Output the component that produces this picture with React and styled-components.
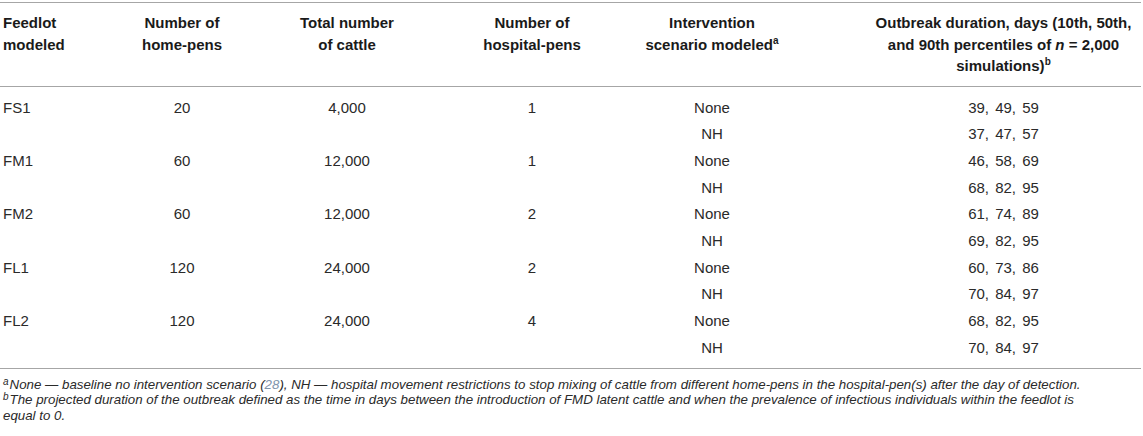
import React from "react";
import styled, { createGlobalStyle } from "styled-components";

const Global = createGlobalStyle`
  html, body { margin: 0; padding: 0; background: #fff; }
  body { font-family: "Liberation Sans", Arial, sans-serif; color: #222; }
`;

const Wrap = styled.div`
  width: 1141px;
  padding-top: 2px;
`;

const Table = styled.table`
  width: 100%;
  table-layout: fixed;
  border-collapse: collapse;
  border-top: 1px solid #a6a6a6;
  border-bottom: 1px solid #a6a6a6;
  font-size: 15px;
`;

const Th = styled.th`
  font-weight: bold;
  color: #1a1a1a;
  line-height: 21.5px;
  vertical-align: top;
  text-align: ${(p) => (p.$left ? "left" : "center")};
  padding: 9px 0 9px 0;
  padding-left: ${(p) => (p.$pl != null ? p.$pl : p.$left ? 3 : 0)}px;
  border-bottom: 1px solid #a6a6a6;
`;

const Td = styled.td`
  color: #2a2a2a;
  line-height: 20.7px;
  text-align: ${(p) => (p.$left ? "left" : "center")};
  padding-top: ${(p) => (p.$first ? 11 : 3)}px;
  padding-bottom: ${(p) => (p.$last ? 9 : 3)}px;
  padding-right: 0;
  padding-left: ${(p) => (p.$pl != null ? p.$pl : p.$left ? 3 : 0)}px;
  word-spacing: ${(p) => (p.$wide ? 2 : 0)}px;
  white-space: nowrap;
`;

const Sup = styled.sup`
  font-size: ${(p) => (p.$note ? 10 : 10)}px;
  line-height: 0;
  vertical-align: ${(p) => (p.$note ? 4 : 6)}px;
  margin-right: ${(p) => (p.$note ? 1 : 0)}px;
`;

const Notes = styled.div`
  padding: 8px 0 0 3px;
  font-size: 13.3px;
  font-style: italic;
  line-height: 15.5px;
  color: #2a2a2a;
`;

const Note = styled.p`
  margin: 0;
`;

const Ref = styled.span`
  color: #7f95ad;
`;

const cols = [110, 144, 186, 184, 176, 341];

const data = [
  ["FS1", "20", "4,000", "1", ["None", "NH"], ["39, 49, 59", "37, 47, 57"]],
  ["FM1", "60", "12,000", "1", ["None", "NH"], ["46, 58, 69", "68, 82, 95"]],
  ["FM2", "60", "12,000", "2", ["None", "NH"], ["61, 74, 89", "69, 82, 95"]],
  ["FL1", "120", "24,000", "2", ["None", "NH"], ["60, 73, 86", "70, 84, 97"]],
  ["FL2", "120", "24,000", "4", ["None", "NH"], ["68, 82, 95", "70, 84, 97"]],
];

export default function App() {
  const rows = [];
  data.forEach((d, gi) => {
    [0, 1].forEach((si) => {
      const first = gi === 0 && si === 0;
      const last = gi === data.length - 1 && si === 1;
      rows.push(
        <tr key={`${gi}-${si}`}>
          <Td $left $first={first} $last={last}>{si === 0 ? d[0] : ""}</Td>
          <Td $first={first} $last={last}>{si === 0 ? d[1] : ""}</Td>
          <Td $first={first} $last={last}>{si === 0 ? d[2] : ""}</Td>
          <Td $first={first} $last={last}>{si === 0 ? d[3] : ""}</Td>
          <Td $first={first} $last={last}>{d[4][si]}</Td>
          <Td $first={first} $last={last} $pl={66} $wide>{d[5][si]}</Td>
        </tr>
      );
    });
  });

  return (
    <Wrap>
      <Global />
      <Table>
        <colgroup>
          {cols.map((w, i) => (
            <col key={i} style={{ width: w }} />
          ))}
        </colgroup>
        <thead>
          <tr>
            <Th $left>Feedlot<br />modeled</Th>
            <Th>Number of<br />home-pens</Th>
            <Th>Total number<br />of cattle</Th>
            <Th>Number of<br />hospital-pens</Th>
            <Th>Intervention<br />scenario modeled<Sup>a</Sup></Th>
            <Th $pl={66}>
              Outbreak duration, days (10th, 50th,<br />
              and 90th percentiles of <i>n</i> = 2,000<br />
              simulations)<Sup>b</Sup>
            </Th>
          </tr>
        </thead>
        <tbody>{rows}</tbody>
      </Table>
      <Notes>
        <Note>
          <Sup $note>a</Sup>None — baseline no intervention scenario (<Ref>28</Ref>), NH — hospital movement restrictions to stop mixing of cattle from different home-pens in the hospital-pen(s) after the day of detection.
        </Note>
        <Note>
          <Sup $note>b</Sup>The projected duration of the outbreak defined as the time in days between the introduction of FMD latent cattle and when the prevalence of infectious individuals within the feedlot is
          <br />
          equal to 0.
        </Note>
      </Notes>
    </Wrap>
  );
}
